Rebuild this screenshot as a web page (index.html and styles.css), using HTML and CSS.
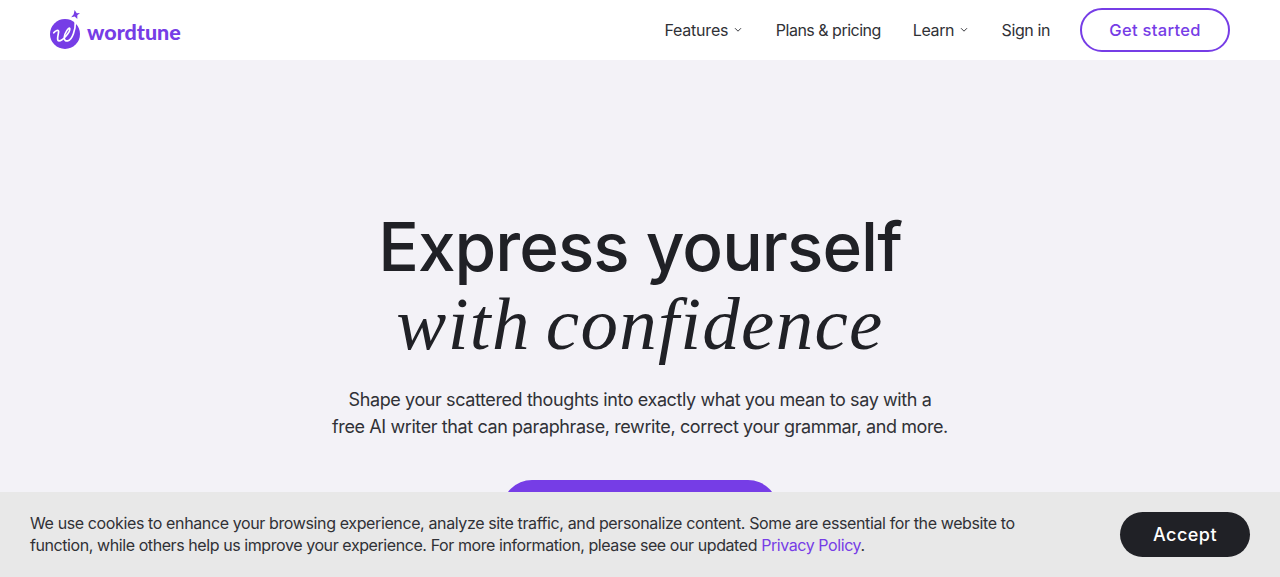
FILE: index.html
```html
<!DOCTYPE html>
<html lang="en">
<head>
    <meta charset="UTF-8">
    <title>Wordtune</title>
    <link rel="stylesheet" href="styles.css">
</head>
<body>

<header class="header">
    <a class="logo" href="#">
        <svg class="logo-icon" width="32" height="40" viewBox="0 0 32 40">
            <circle cx="15" cy="24" r="15" fill="#763de6"/>
            <path d="M3.8 22.8 C5.5 20.4 8.6 19.4 8.6 21.6 C8.6 24 6.2 30.7 9 30.9 C12.4 31 20.2 22.5 19.8 18.6 C19.3 16 14.2 23.5 14.2 27.6 C14.2 30 15.6 31.2 17.6 30.9 C22.5 30 25.6 19 25.3 12" fill="none" stroke="#fff" stroke-width="1.7" stroke-linecap="round"/>
            <path d="M24.6 0 L26.8 3.2 L30 2.9 L27.3 5.3 L27.3 9 L24.7 6.6 L21.2 7.2 L23.7 4.2 Z" fill="#763de6"/>
        </svg>
        <span class="logo-text">wordtune</span>
    </a>
    <nav class="nav">
        <a class="nav-link features" href="#">Features
            <svg class="chevron" width="8" height="6" viewBox="0 0 8 6"><path d="M1 1.2 L4 4.2 L7 1.2"/></svg>
        </a>
        <a class="nav-link plans" href="#">Plans &amp; pricing</a>
        <a class="nav-link learn" href="#">Learn
            <svg class="chevron" width="8" height="6" viewBox="0 0 8 6"><path d="M1 1.2 L4 4.2 L7 1.2"/></svg>
        </a>
        <a class="nav-link signin" href="#">Sign in</a>
        <a class="get-started" href="#">Get started</a>
    </nav>
</header>

<main class="hero">
    <h1 class="title">
        <span class="title-main">Express yourself</span>
        <span class="title-italic">with confidence</span>
    </h1>
    <p class="subtitle">
        Shape your scattered thoughts into exactly what you mean to say with a<br>
        free AI writer that can paraphrase, rewrite, correct your grammar, and more.
    </p>
    <a class="hero-button" href="#"></a>
</main>

<div class="cookies">
    <p class="cookies-text">
        We use cookies to enhance your browsing experience, analyze site traffic, and personalize content. Some are essential for the website to<br>
        <span class="cookies-more">function, while others help us improve your experience. For more information, please see our updated <a href="#">Privacy Policy</a>.</span>
    </p>
    <button class="accept">Accept</button>
</div>

</body>
</html>
```
FILE: styles.css
```css
* {
    box-sizing: border-box;
}
body {
    margin: 0;
    height: 577px;
    overflow: hidden;
    background-color: #f3f2f7;
    font-family: Inter, "Liberation Sans", sans-serif;
    color: #202126;
}
a {
    text-decoration: none;
    color: inherit;
}
.header {
    display: flex;
    justify-content: space-between;
    height: 60px;
    padding: 0 50px;
    background-color: white;
}
.logo {
    display: flex;
    color: #763de6;
}
.logo-icon {
    margin-top: 10px;
}
.logo-text {
    margin: 20px 0 0 5px;
    font-family: Lato, sans-serif;
    font-size: 21.5px;
    line-height: 25px;
    font-weight: 900;
}
.nav {
    display: flex;
    align-items: center;
    font-size: 16px;
    white-space: nowrap;
}
.nav-link {
    display: flex;
    align-items: center;
    margin-right: 33.5px;
    color: #303136;
    letter-spacing: -0.4px;
}
.nav-link.features {
    letter-spacing: -0.2px;
}
.nav-link.plans {
    margin-right: 32px;
    letter-spacing: -0.5px;
}
.nav-link.signin {
    margin-right: 30px;
}
.chevron {
    margin-left: 6px;
    fill: none;
    stroke: #3c3d42;
    stroke-width: 1;
}
.get-started {
    width: 150px;
    height: 44px;
    border: 2px solid #763de6;
    border-radius: 22px;
    color: #763de6;
    font-size: 16.5px;
    font-weight: 500;
    line-height: 40px;
    letter-spacing: 0.3px;
    text-align: center;
}
.hero {
    display: flex;
    flex-direction: column;
    align-items: center;
    height: 432px;
    padding-top: 148px;
    overflow: hidden;
    text-align: center;
    white-space: nowrap;
}
.title {
    margin: 0;
    font-weight: 500;
}
.title span {
    display: block;
    height: 77px;
    line-height: 77px;
}
.title-main {
    font-size: 67.5px;
    letter-spacing: -0.95px;
}
.title-italic {
    font-family: "Liberation Serif", serif;
    font-size: 75px;
    font-style: italic;
    font-weight: 400;
    letter-spacing: 1.3px;
    word-spacing: -5px;
}
.subtitle {
    margin: 24px 0 0;
    color: #303136;
    font-size: 18px;
    line-height: 27px;
    letter-spacing: -0.4px;
}
.hero-button {
    flex: none;
    width: 276px;
    height: 60px;
    margin-top: 40px;
    border-radius: 30px;
    background-color: #763de6;
}
.cookies {
    display: flex;
    justify-content: space-between;
    height: 85px;
    padding: 20px 30px;
    background-color: #e8e8e8;
}
.cookies-text {
    margin: 0;
    color: #303136;
    font-size: 16px;
    line-height: 22px;
    letter-spacing: -0.38px;
    white-space: nowrap;
}
.cookies-more {
    letter-spacing: -0.42px;
}
.cookies-text a {
    color: #763de6;
}
.accept {
    width: 130px;
    height: 45px;
    border: none;
    border-radius: 23px;
    background-color: #202126;
    color: white;
    font-family: inherit;
    font-size: 18px;
    font-weight: 500;
    letter-spacing: 0.5px;
}
```
